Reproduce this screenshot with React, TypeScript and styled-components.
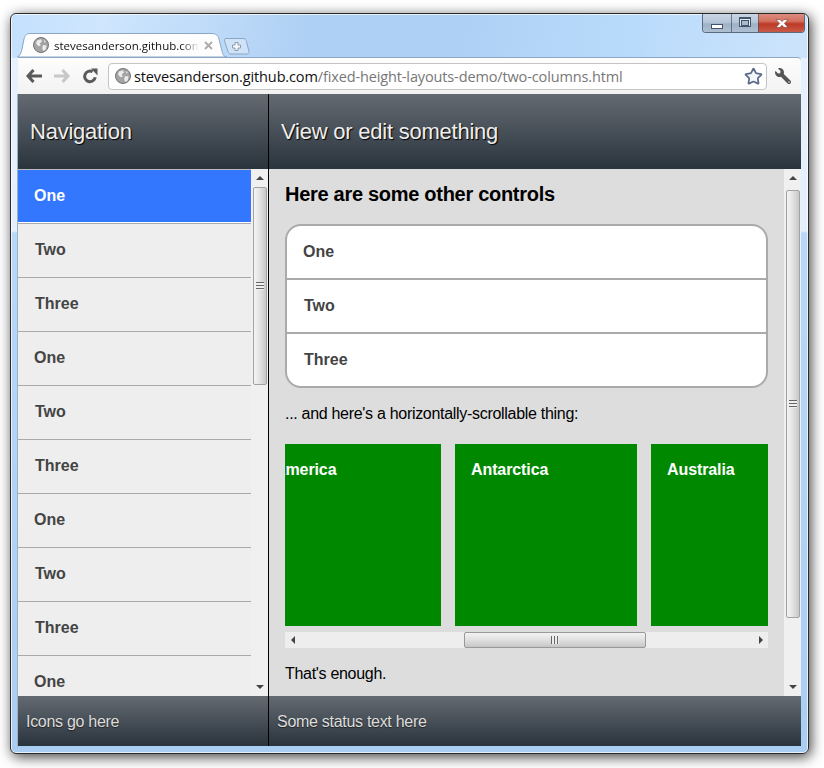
import React from "react";
import styled, {createGlobalStyle} from "styled-components";
import {Star} from "lucide-react";
import {FaWrench} from "react-icons/fa";

const GlobalStyle = createGlobalStyle`
  html, body {
    margin: 0;
    height: 100%;
    background: #fff;
    overflow: hidden;
  }
  body {
    font-family: "Liberation Sans", Arial, sans-serif;
    font-size: 16px;
  }
  * {
    box-sizing: border-box;
  }
`;

const Desktop = styled.div`
  padding: 13px 0 0 10px;
`;

const Window = styled.div`
  position: relative;
  width: 799px;
  height: 741px;
  display: flex;
  flex-direction: column;
  padding: 0 7px 6px;
  border: 1px solid #2a2a2a;
  border-radius: 6px;
  box-shadow: 2px 3px 13px rgba(0, 0, 0, 0.75), inset 0 0 0 1px rgba(255, 255, 255, 0.7);
  background:
    linear-gradient(100deg, #c4e0fd 0, #cfe6fd 90px, #aed0f4 300px, #aed0f4 440px, #b9dbfb 620px, #cbe3fb 770px) top / 100% 44px no-repeat,
    linear-gradient(180deg, #e6f2fd 0, #e3effc 217px, #b7d8f8 219px, #aacdf3 100%);
`;

const Caption = styled.div`
  position: absolute;
  top: 0;
  right: 3px;
  display: flex;
  height: 19px;
  border: 1px solid #5b6a7c;
  border-top: 0;
  border-radius: 0 0 4px 4px;
  overflow: hidden;
`;

const CaptionButton = styled.div<{$width: number; $close?: boolean}>`
  width: ${p => p.$width}px;
  display: flex;
  align-items: center;
  justify-content: center;
  border-left: 1px solid rgba(70, 85, 100, 0.7);
  background: ${p => p.$close
    ? "linear-gradient(180deg, #dc8c80 0, #d4705f 40%, #bd3a26 55%, #c85a48 100%)"
    : "linear-gradient(180deg, #c9d6e4 0, #b7c7d8 45%, #9fb2c6 55%, #aebfd1 100%)"};
  &:first-child {
    border-left: 0;
  }
`;

const MinGlyph = styled.span`
  width: 12px;
  height: 5px;
  margin-top: 6px;
  background: #fff;
  border: 1px solid #44546a;
`;

const MaxGlyph = styled.span`
  width: 12px;
  height: 10px;
  margin-top: -2px;
  border: 1px solid #44546a;
  border-top-width: 2px;
  background: #dfe8f1;
  display: flex;
  align-items: center;
  justify-content: center;
  &::after {
    content: "";
    width: 6px;
    height: 4px;
    background: #a9bccf;
    border: 1px solid #44546a;
  }
`;

const TabStrip = styled.div`
  height: 43px;
  display: flex;
  align-items: flex-end;
  flex: none;
`;

const Tab = styled.div`
  position: relative;
  width: 210px;
  height: 24px;
  display: flex;
  align-items: center;
  padding-left: 16px;
  flex: none;
  z-index: 1;
  margin-left: -1px;
`;

const TabShape = styled.svg`
  position: absolute;
  left: 0;
  top: 0;
`;

const TabIcon = styled.span`
  position: relative;
  display: flex;
`;

const TabTitle = styled.span`
  position: relative;
  width: 145px;
  margin-left: 5px;
  overflow: hidden;
  white-space: nowrap;
  font-family: "Open Sans", "Noto Sans", sans-serif;
  font-size: 11.5px;
  color: #111;
  -webkit-mask-image: linear-gradient(90deg, #000 88%, transparent 100%);
  mask-image: linear-gradient(90deg, #000 88%, transparent 100%);
`;

const TabClose = styled.svg`
  position: relative;
  margin-left: 5px;
`;

const NewTab = styled.svg`
  flex: none;
  margin: 0 0 2px -4px;
`;

const Toolbar = styled.div`
  height: 37px;
  flex: none;
  display: flex;
  align-items: center;
  padding-left: 2px;
  border-top: 1px solid #8ba6c6;
  border-radius: 0 4px 0 0;
  background: linear-gradient(180deg, #fdfdfd 0, #f2f2f2 100%);
`;

const NavIcon = styled.div<{$muted?: boolean}>`
  width: 28px;
  height: 28px;
  flex: none;
  display: flex;
  align-items: center;
  justify-content: center;
  color: ${p => p.$muted ? "#c8c8c8" : "#5a5a5a"};
`;

const AddressBar = styled.div`
  width: 659px;
  height: 27px;
  flex: none;
  margin-left: 4px;
  display: flex;
  align-items: center;
  padding: 0 3px 0 6px;
  background: #fff;
  border: 1px solid #c4c4c4;
  border-radius: 4px;
`;

const Url = styled.span`
  flex: 1;
  margin-left: 3px;
  white-space: nowrap;
  font-family: "Open Sans", "Noto Sans", sans-serif;
  font-size: 14.5px;
  letter-spacing: -0.13px;
  color: #777;
`;

const UrlHost = styled.span`
  color: #111;
`;

const Wrench = styled.div`
  flex: 1;
  padding-left: 1px;
  display: flex;
  justify-content: center;
  color: #555;
  transform: scaleX(-1);
`;

const Layout = styled.div`
  flex: 1;
  min-height: 0;
  display: grid;
  grid-template-columns: 251px 532px;
  grid-template-rows: 75px 527px 50px;
  box-shadow: -1px 0 0 #9fb0c0;
`;

const Bar = styled.div<{$divider?: boolean}>`
  display: flex;
  align-items: center;
  background: linear-gradient(180deg, #646a72 0, #2a343d 100%);
  border-right: ${p => p.$divider ? "1px solid #000" : "0"};
`;

const HeaderTitle = styled.h1`
  margin: 0 0 0 12px;
  font-size: 22px;
  font-weight: 400;
  letter-spacing: -0.23px;
  color: #eee;
  text-shadow: 1px 1px 1px #000;
`;

const FooterText = styled.span`
  margin: 1px 0 0 8px;
  font-size: 16px;
  letter-spacing: -0.29px;
  color: #ddd;
  text-shadow: 0 1px 1px #222;
`;

const NavPane = styled.div`
  display: flex;
  min-height: 0;
  border-right: 1px solid #000;
  background: #eee;
`;

const NavList = styled.ul`
  flex: 1;
  margin: 0;
  padding: 0;
  list-style: none;
  overflow: hidden;
  border-top: 1px solid #bbb;
`;

const NavRow = styled.li<{$selected?: boolean; $inset: number}>`
  height: 54px;
  padding: 0 0 2px ${p => p.$inset}px;
  display: flex;
  align-items: center;
  font-weight: 700;
  color: ${p => p.$selected ? "#fff" : "#444"};
  background: ${p => p.$selected ? "linear-gradient(180deg, #3377ff 0, #3377ff 52px, #fff 52px)" : "#eee"};
  border-bottom: 1px solid #aaa;
`;

const ScrollY = styled.div`
  width: 17px;
  flex: none;
  display: flex;
  flex-direction: column;
  background: #f0f0f0;
`;

const Arrow = styled.div<{$dir: "up" | "down" | "left" | "right"}>`
  flex: none;
  width: ${p => p.$dir === "up" || p.$dir === "down" ? "17px" : "15px"};
  height: ${p => p.$dir === "up" || p.$dir === "down" ? "18px" : "16px"};
  display: flex;
  align-items: center;
  justify-content: center;
  &::after {
    content: "";
    border-style: solid;
    border-color: transparent;
    border-width: 4px;
    ${p => p.$dir === "up" && "border-bottom-color: #444; border-top-width: 0;"}
    ${p => p.$dir === "down" && "border-top-color: #444; border-bottom-width: 0;"}
    ${p => p.$dir === "left" && "border-right-color: #444; border-left-width: 0;"}
    ${p => p.$dir === "right" && "border-left-color: #444; border-right-width: 0;"}
  }
`;

const ThumbY = styled.div<{$top: number; $height: number}>`
  flex: none;
  height: ${p => p.$height}px;
  margin: ${p => p.$top}px 1px 0 2px;
  display: flex;
  align-items: center;
  justify-content: center;
  border: 1px solid #a2a2a2;
  border-radius: 2px;
  background: linear-gradient(90deg, #f4f4f4 0, #e6e6e6 40%, #c8c8c8 100%);
`;

const Grip = styled.span<{$horizontal?: boolean}>`
  width: 8px;
  height: 8px;
  background: ${p => p.$horizontal
    ? "repeating-linear-gradient(90deg, #666 0, #666 1px, #eee 1px, #eee 3px)"
    : "repeating-linear-gradient(180deg, #666 0, #666 1px, #eee 1px, #eee 3px)"};
`;

const Spacer = styled.div`
  flex: 1;
`;

const ContentPane = styled.div`
  display: flex;
  min-height: 0;
  background: #ddd;
`;

const Content = styled.div`
  flex: 1;
  min-width: 0;
  padding: 14px 16px 0;
  overflow: hidden;
`;

const Heading = styled.h2`
  margin: 0;
  font-size: 20px;
  line-height: 23px;
  font-weight: 700;
  letter-spacing: -0.29px;
  color: #000;
`;

const ControlList = styled.ul`
  margin: 18px 0 0;
  padding: 0;
  list-style: none;
  background: #fff;
  border: 2px solid #aaa;
  border-radius: 16px;
`;

const ControlRow = styled.li<{$inset: number}>`
  height: 54px;
  padding-left: ${p => p.$inset}px;
  display: flex;
  align-items: center;
  font-weight: 700;
  color: #444;
  border-bottom: 2px solid #aaa;
  &:last-child {
    height: 52px;
    border-bottom: 0;
  }
`;

const Paragraph = styled.p<{$top: number}>`
  margin: ${p => p.$top}px 0 0;
  line-height: 18px;
  letter-spacing: -0.3px;
  color: #000;
`;

const Strip = styled.div`
  display: flex;
  gap: 14px;
  height: 182px;
  margin-top: 21px;
  overflow: hidden;
`;

const Continent = styled.div<{$width: number; $offset?: number}>`
  flex: none;
  width: ${p => p.$width}px;
  margin-left: ${p => p.$offset ?? 0}px;
  padding: 17px 16px;
  background: #008800;
  color: #fff;
  font-weight: 700;
  letter-spacing: -0.1px;
`;

const ScrollX = styled.div`
  display: flex;
  height: 16px;
  margin-top: 6px;
  background: #eee;
`;

const ThumbX = styled.div<{$left: number; $width: number}>`
  flex: none;
  width: ${p => p.$width}px;
  margin-left: ${p => p.$left}px;
  display: flex;
  align-items: center;
  justify-content: center;
  border: 1px solid #999;
  border-radius: 2px;
  background: linear-gradient(180deg, #f2f2f2 0, #e2e2e2 45%, #c6c6c6 100%);
`;

const navItems = ["One", "Two", "Three", "One", "Two", "Three", "One", "Two", "Three", "One"];
const controlItems = ["One", "Two", "Three"];

// "One" sits a pixel further left than the other labels in the reference
const insetFor = (label: string, base: number) => (label === "One" ? base : base + 1);

const Globe = () => (
  <svg width="16" height="16" viewBox="0 0 16 16">
    <circle cx="8" cy="8" r="7.5" fill="#a4a4a4" stroke="#747474" />
    <path d="M4 3.5 L8 2.2 L9 4.5 L6.8 6.2 L7.8 8.6 L5.6 9.2 L3 6.6 Z" fill="#ececec" />
    <path d="M10 8 L13.6 8.4 L12.6 12.4 L10.2 14 L9.2 11 Z" fill="#ececec" />
    <path d="M10.8 2.8 L13 5 L11.6 5.6 Z" fill="#ececec" />
  </svg>
);

const CloseGlyph = () => (
  <svg width="18" height="11" viewBox="0 0 18 11">
    <path d="M3 1.5 H7 L9 3.6 L11 1.5 H15 L11.4 5.4 L15 9.5 H11 L9 7.2 L7 9.5 H3 L6.6 5.4 Z" fill="#fff" stroke="#7a3a32" strokeWidth="0.6" />
  </svg>
);

const BackIcon = () => (
  <svg width="16" height="14" viewBox="0 0 16 14" fill="none" stroke="currentColor" strokeWidth="3.1">
    <path d="M7.5 1 L2 7 L7.5 13 M2.5 7 H16" />
  </svg>
);

const ForwardIcon = () => (
  <svg width="16" height="14" viewBox="0 0 16 14" fill="none" stroke="currentColor" strokeWidth="3.1">
    <path d="M8.5 1 L14 7 L8.5 13 M13.5 7 H0" />
  </svg>
);

const ReloadIcon = () => (
  <svg width="16" height="16" viewBox="0 0 16 16">
    <path d="M13.2 9.2 A5.3 5.3 0 1 1 10.6 3.8" fill="none" stroke="currentColor" strokeWidth="3" />
    <path d="M9 0.5 L15.5 0.5 L15.5 7.5 Z" fill="currentColor" />
  </svg>
);

export default function App() {
  return (
    <Desktop>
      <GlobalStyle />
      <Window>
        <Caption>
          <CaptionButton $width={28}><MinGlyph /></CaptionButton>
          <CaptionButton $width={27}><MaxGlyph /></CaptionButton>
          <CaptionButton $width={46} $close><CloseGlyph /></CaptionButton>
        </Caption>
        <TabStrip>
          <Tab>
            <TabShape width="210" height="24" viewBox="0 0 210 24">
              <path
                d="M0 24 C3 23 4 20 5 16 L7 6 C8 2 10 0.5 13 0.5 L195 0.5 C198 0.5 201 2 202 6 L205 18 C206 22 207 24 210 24 Z"
                fill="#fdfdfd"
                stroke="#8ba6c6"
              />
            </TabShape>
            <TabIcon><Globe /></TabIcon>
            <TabTitle>stevesanderson.github.com</TabTitle>
            <TabClose width="9" height="9" viewBox="0 0 9 9">
              <path d="M1 1 L8 8 M8 1 L1 8" stroke="#aaa" strokeWidth="1.8" />
            </TabClose>
          </Tab>
          <NewTab width="27" height="17" viewBox="0 0 27 17">
            <path d="M3 0.5 H20 C22 0.5 23 1.5 23.5 3.5 L26 13.5 C26.4 15 25.5 16 24 16 H8 C6.5 16 5.5 15 5 13.5 L1.5 3 C1 1.5 1.8 0.5 3 0.5 Z" fill="#cfe3f8" stroke="#8ba6c6" />
            <path d="M12 4.5 H15 V7 H17.5 V10 H15 V12.5 H12 V10 H9.5 V7 H12 Z" fill="#f4f8fc" stroke="#8e9cae" />
          </NewTab>
        </TabStrip>
        <Toolbar>
          <NavIcon><BackIcon /></NavIcon>
          <NavIcon $muted><ForwardIcon /></NavIcon>
          <NavIcon><ReloadIcon /></NavIcon>
          <AddressBar>
            <Globe />
            <Url><UrlHost>stevesanderson.github.com</UrlHost>/fixed-height-layouts-demo/two-columns.html</Url>
            <Star size={19} strokeWidth={2.2} color="#5b6b8c" fill="#f4f6fa" />
          </AddressBar>
          <Wrench><FaWrench size={16} /></Wrench>
        </Toolbar>
        <Layout>
          <Bar $divider><HeaderTitle>Navigation</HeaderTitle></Bar>
          <Bar><HeaderTitle>View or edit something</HeaderTitle></Bar>
          <NavPane>
            <NavList>
              {navItems.map((item, i) => (
                <NavRow key={i} $selected={i === 0} $inset={insetFor(item, 16)}>{item}</NavRow>
              ))}
            </NavList>
            <ScrollY>
              <Arrow $dir="up" />
              <ThumbY $top={0} $height={198}><Grip /></ThumbY>
              <Spacer />
              <Arrow $dir="down" />
            </ScrollY>
          </NavPane>
          <ContentPane>
            <Content>
              <Heading>Here are some other controls</Heading>
              <ControlList>
                {controlItems.map(item => (
                  <ControlRow key={item} $inset={insetFor(item, 16)}>{item}</ControlRow>
                ))}
              </ControlList>
              <Paragraph $top={17}>... and here's a horizontally-scrollable thing:</Paragraph>
              <Strip>
                <Continent $width={183} $offset={-27}>America</Continent>
                <Continent $width={182}>Antarctica</Continent>
                <Continent $width={182}>Australia</Continent>
              </Strip>
              <ScrollX>
                <Arrow $dir="left" />
                <ThumbX $left={164} $width={182}><Grip $horizontal /></ThumbX>
                <Spacer />
                <Arrow $dir="right" />
              </ScrollX>
              <Paragraph $top={17}>That's enough.</Paragraph>
            </Content>
            <ScrollY>
              <Arrow $dir="up" />
              <ThumbY $top={3} $height={428}><Grip /></ThumbY>
              <Spacer />
              <Arrow $dir="down" />
            </ScrollY>
          </ContentPane>
          <Bar $divider><FooterText>Icons go here</FooterText></Bar>
          <Bar><FooterText>Some status text here</FooterText></Bar>
        </Layout>
      </Window>
    </Desktop>
  );
}
